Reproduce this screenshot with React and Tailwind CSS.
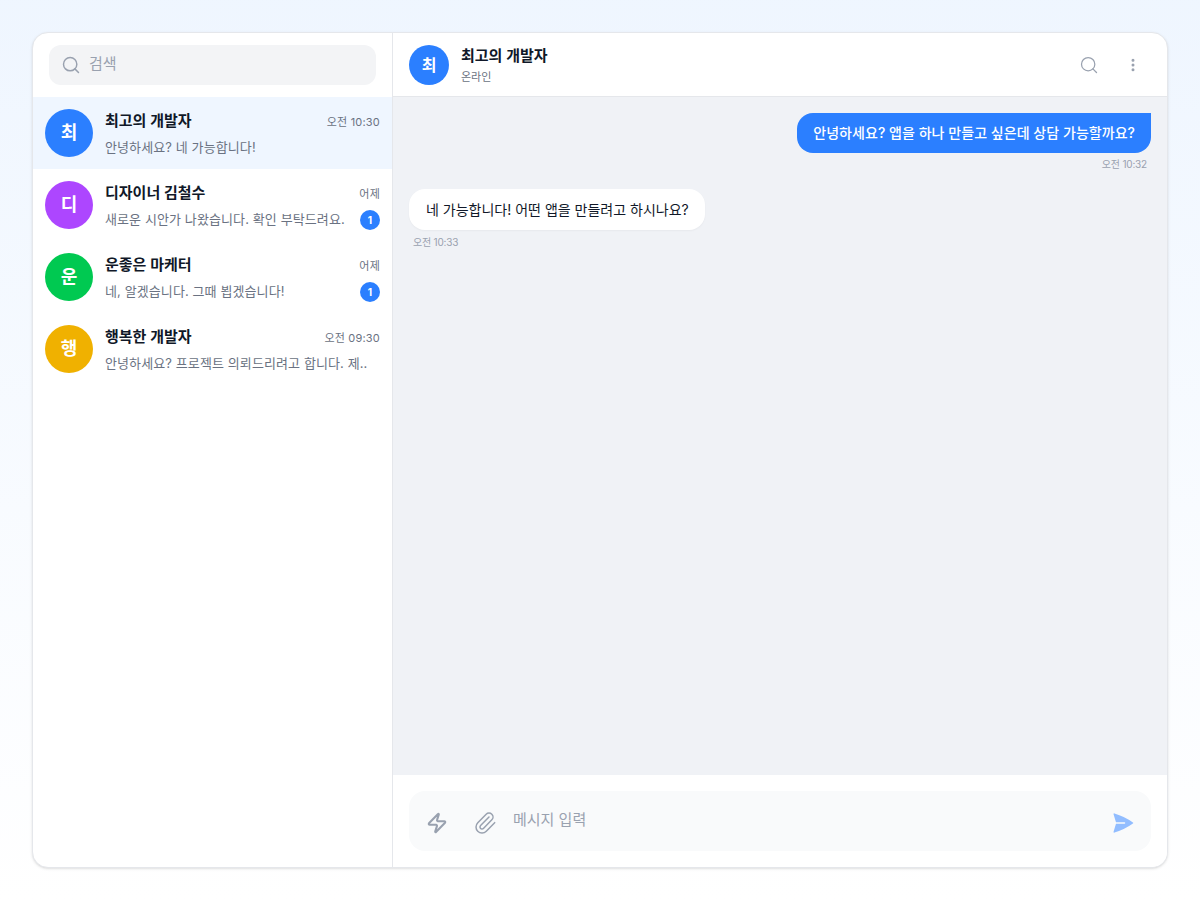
import React from "react";
import { Search, EllipsisVertical, Zap, Paperclip } from "lucide-react";
import { HiPaperAirplane } from "react-icons/hi2";

const font = { fontFamily: '"Inter", "Noto Sans CJK KR", sans-serif' };

const chats = [
  { ch: "최", color: "bg-blue-500", name: "최고의 개발자", time: "오전 10:30", msg: "안녕하세요? 네 가능합니다!", active: true },
  { ch: "디", color: "bg-purple-500", name: "디자이너 김철수", time: "어제", msg: "새로운 시안가 나왔습니다. 확인 부탁드려요.", badge: 1 },
  { ch: "운", color: "bg-green-500", name: "운좋은 마케터", time: "어제", msg: "네, 알겠습니다. 그때 뵙겠습니다!", badge: 1 },
  { ch: "행", color: "bg-yellow-500", name: "행복한 개발자", time: "오전 09:30", msg: "안녕하세요? 프로젝트 의뢰드리려고 합니다. 제.." },
];

function ChatRow({ c }) {
  return (
    <div className={`flex h-[72px] items-center gap-3 px-3 ${c.active ? "bg-blue-50" : "bg-white"}`}>
      <div className={`flex h-12 w-12 shrink-0 items-center justify-center rounded-full text-lg font-bold text-white ${c.color}`}>{c.ch}</div>
      <div className="min-w-0 flex-1 pt-[2px]">
        <div className="flex h-6 items-center justify-between">
          <span className="-translate-y-px text-[15px] leading-6 font-semibold text-gray-900">{c.name}</span>
          <span className="text-[11px] tracking-[0.2px] text-gray-500">{c.time}</span>
        </div>
        <div className="mt-1 flex h-5 items-center justify-between">
          <span className="truncate text-[13px] tracking-[0.1px] text-gray-500">{c.msg}</span>
          {c.badge && (
            <span className="flex h-5 w-5 shrink-0 items-center justify-center rounded-full bg-blue-500 text-[10px] font-bold text-white">{c.badge}</span>
          )}
        </div>
      </div>
    </div>
  );
}

export default function App() {
  return (
    <div style={font} className="h-[900px] w-full bg-gradient-to-b from-blue-50 to-white p-8">
      <div className="flex h-[836px] overflow-hidden rounded-2xl border border-gray-200 bg-white shadow-sm">
        <aside className="flex w-[360px] shrink-0 flex-col border-r border-gray-200">
          <div className="px-4 py-3">
            <div className="flex h-10 items-center gap-2 rounded-xl bg-gray-100 px-3">
              <Search className="h-5 w-5 text-gray-400" strokeWidth={1.75} />
              <span className="-translate-y-px text-[15px] text-gray-400">검색</span>
            </div>
          </div>
          <div>
            {chats.map((c) => (
              <ChatRow key={c.name} c={c} />
            ))}
          </div>
        </aside>
        <main className="flex min-w-0 flex-1 flex-col">
          <header className="flex h-16 shrink-0 items-center gap-3 border-b border-gray-200 px-4">
            <div className="flex h-10 w-10 items-center justify-center rounded-full bg-blue-500 text-base font-bold text-white">최</div>
            <div className="flex-1 pt-[2px]">
              <div className="text-[15px] leading-5 font-semibold text-gray-900">최고의 개발자</div>
              <div className="mt-[3px] text-[11px] leading-4 text-gray-500">온라인</div>
            </div>
            <div className="flex items-center gap-[26px] pr-[10px]">
              <Search className="h-5 w-5 text-gray-400" strokeWidth={1.5} />
              <EllipsisVertical className="h-4 w-4 text-gray-400" strokeWidth={2.5} />
            </div>
          </header>
          <div className="flex flex-1 flex-col bg-[#f0f2f6] p-4">
            <div className="flex flex-col items-end">
              <div className="rounded-2xl rounded-tr-none bg-blue-500 px-4 py-2.5 text-sm leading-5 font-medium tracking-[0.04px] text-white">안녕하세요? 앱을 하나 만들고 싶은데 상담 가능할까요?</div>
              <div className="mt-[3px] mr-1 text-[10px] leading-4 tracking-[-0.2px] text-gray-400">오전 10:32</div>
            </div>
            <div className="mt-[17px] flex flex-col items-start">
              <div className="rounded-2xl bg-white py-[10.5px] pr-4 pl-[17px] text-sm leading-5 text-gray-900 shadow-[0_1px_2px_rgba(0,0,0,0.04)]">네 가능합니다! 어떤 앱을 만들려고 하시나요?</div>
              <div className="mt-1 ml-1 text-[10px] leading-4 tracking-[-0.2px] text-gray-400">오전 10:33</div>
            </div>
          </div>
          <div className="shrink-0 bg-white p-4">
            <div className="flex h-[60px] items-center rounded-2xl bg-gray-50 pt-1 pr-4 pl-[17px]">
              <Zap className="h-[22px] w-[22px] shrink-0 text-gray-400" strokeWidth={2.25} />
              <Paperclip className="ml-[25px] h-6 w-6 shrink-0 text-gray-400" strokeWidth={1.5} />
              <span className="ml-4 flex-1 -translate-y-[3px] text-[15px] text-gray-400">메시지 입력</span>
              <HiPaperAirplane className="h-6 w-6 text-blue-500/50" />
            </div>
          </div>
        </main>
      </div>
    </div>
  );
}
